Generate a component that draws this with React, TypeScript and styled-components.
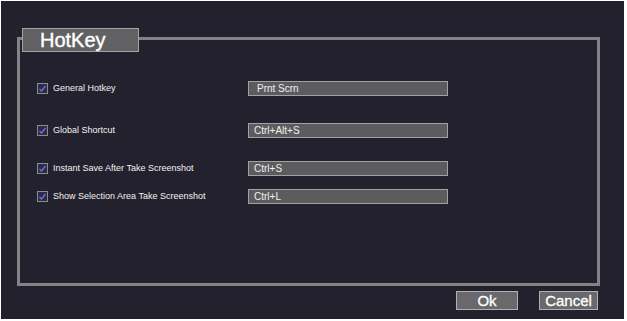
import React from 'react';
import styled, { createGlobalStyle } from 'styled-components';

const GlobalStyle = createGlobalStyle`
  html, body {
    margin: 0;
    padding: 0;
    background: #ffffff;
  }
  body {
    font-family: "Liberation Sans", Arial, sans-serif;
  }
`;

type Hotkey = {
  label: string;
  value: string;
  gap: number;
  valueIndent: number;
};

const hotkeys: Hotkey[] = [
  { label: 'General Hotkey', value: 'Prnt Scrn', gap: 0, valueIndent: 8 },
  { label: 'Global Shortcut', value: 'Ctrl+Alt+S', gap: 26, valueIndent: 5 },
  { label: 'Instant Save After Take Screenshot', value: 'Ctrl+S', gap: 22, valueIndent: 5 },
  { label: 'Show Selection Area Take Screenshot', value: 'Ctrl+L', gap: 12, valueIndent: 5 },
];

const CheckMark: React.FC = () => (
  <svg width="9" height="9" viewBox="0 0 9 9">
    <path d="M1.5 5 L3.5 7 L7.5 2" fill="none" stroke="#6f72e8" strokeWidth="1.3" />
  </svg>
);

export default function App() {
  return (
    <>
      <GlobalStyle />
      <Window>
        <Frame>
          <TitleTab>HotKey</TitleTab>
          <Rows>
            {hotkeys.map((h) => (
              <Row key={h.label} $gap={h.gap}>
                <Checkbox>
                  <CheckMark />
                </Checkbox>
                <Label>{h.label}</Label>
                <KeyField $indent={h.valueIndent}>{h.value}</KeyField>
              </Row>
            ))}
          </Rows>
        </Frame>
        <Footer>
          <DialogButton $width={62}>Ok</DialogButton>
          <DialogButton $width={59}>Cancel</DialogButton>
        </Footer>
      </Window>
    </>
  );
}

// window

const Window = styled.div`
  box-sizing: border-box;
  width: 623px;
  height: 318px;
  margin: 1px 3px 2px 1px;
  background: #22212d;
  padding: 36px 0 0 16px;
  display: flex;
  flex-direction: column;
`;

// frame

const Frame = styled.div`
  position: relative;
  box-sizing: border-box;
  width: 583px;
  height: 249px;
  border: 3px solid #838385;
`;

const TitleTab = styled.div`
  position: absolute;
  top: -12px;
  left: 2px;
  box-sizing: border-box;
  width: 117px;
  height: 24px;
  padding-left: 17px;
  background: #626264;
  border: 1px solid #a3a3a6;
  color: #ffffff;
  font-size: 20px;
  line-height: 22px;
  -webkit-text-stroke: 0.4px #ffffff;
`;

// rows

const Rows = styled.div`
  display: flex;
  flex-direction: column;
  padding: 40px 0 0 17px;
`;

const Row = styled.div<{ $gap: number }>`
  display: grid;
  grid-template-columns: 11px 190px 200px;
  column-gap: 5px;
  align-items: center;
  height: 16px;
  margin-top: ${(p) => p.$gap}px;
`;

const Checkbox = styled.div`
  box-sizing: border-box;
  width: 11px;
  height: 11px;
  border: 1px solid #8c8c90;
  background: #2d2c44;
  display: flex;
  align-items: center;
  justify-content: center;
`;

const Label = styled.span`
  color: #f2f2f2;
  font-size: 9px;
  white-space: nowrap;
`;

const KeyField = styled.div<{ $indent: number }>`
  box-sizing: border-box;
  height: 15px;
  background: #5c5c5e;
  border: 1px solid #a2a2a5;
  color: #f0f0f0;
  font-size: 10px;
  line-height: 13px;
  padding-left: ${(p) => p.$indent}px;
`;

// footer

const Footer = styled.div`
  display: flex;
  justify-content: flex-end;
  gap: 21px;
  width: 581px;
  margin-top: 5px;
`;

const DialogButton = styled.button<{ $width: number }>`
  box-sizing: border-box;
  width: ${(p) => p.$width}px;
  height: 19px;
  padding: 0;
  background: #69696b;
  border: 1px solid #b0b0b3;
  color: #ffffff;
  font-family: "Liberation Sans", Arial, sans-serif;
  font-size: 15px;
  line-height: 17px;
  -webkit-text-stroke: 0.3px #ffffff;
  cursor: pointer;
`;
